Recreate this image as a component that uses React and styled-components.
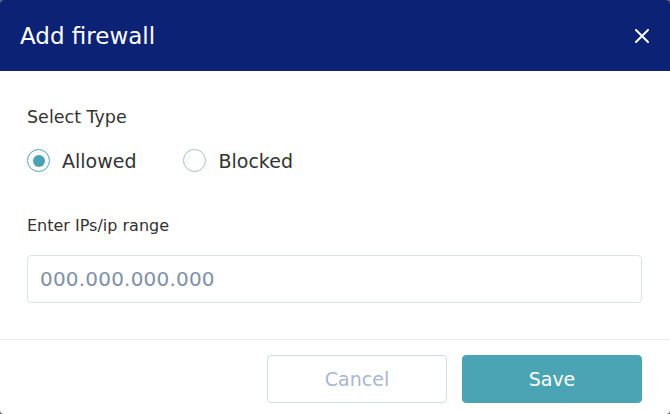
import React, { useState } from 'react'
import styled, { createGlobalStyle } from 'styled-components'

const GlobalStyle = createGlobalStyle`
  html, body {
    margin: 0;
    padding: 0;
    background: #5c5c5c;
  }
  * {
    box-sizing: border-box;
  }
`

const App = () => {
  const [type, setType] = useState('allowed')

  return (
    <>
      <GlobalStyle />
      <Modal>
        <Header>
          <h1>Add firewall</h1>
          <CloseButton aria-label="Close">
            <svg width="14" height="14" viewBox="0 0 14 14">
              <path d="M1 1 L13 13 M13 1 L1 13" stroke="#fff" strokeWidth="2" strokeLinecap="round" />
            </svg>
          </CloseButton>
        </Header>

        <Body>
          <Label>Select Type</Label>
          <RadioRow>
            <RadioOption onClick={() => setType('allowed')}>
              <Circle $checked={type === 'allowed'} />
              <span>Allowed</span>
            </RadioOption>
            <RadioOption onClick={() => setType('blocked')}>
              <Circle $checked={type === 'blocked'} />
              <span>Blocked</span>
            </RadioOption>
          </RadioRow>

          <Label $small>Enter IPs/ip range</Label>
          <Input placeholder="000.000.000.000" />
        </Body>

        <Footer>
          <Button>Cancel</Button>
          <Button $primary>Save</Button>
        </Footer>
      </Modal>
    </>
  )
}

const Modal = styled.div`
  width: 670px;
  height: 414px;
  background: #fff;
  border-radius: 4px;
  overflow: hidden;
  display: flex;
  flex-direction: column;
  font-family: 'DejaVu Sans', 'Noto Sans', sans-serif;
`

const Header = styled.div`
  height: 71px;
  flex-shrink: 0;
  background: #0b2275;
  display: flex;
  align-items: center;
  justify-content: space-between;
  padding: 0 21px 0 20px;

  h1 {
    margin: 0;
    color: #fff;
    font-size: 23px;
    font-weight: 400;
    line-height: 28px;
  }
`

const CloseButton = styled.button`
  border: none;
  background: none;
  padding: 0;
  width: 14px;
  height: 14px;
  display: flex;
  cursor: pointer;
`

const Body = styled.div`
  flex: 1;
  padding: 36px 28px 0 27px;
  display: flex;
  flex-direction: column;
  border-bottom: 1px solid #e8ebf0;
`

const Label = styled.div`
  font-size: ${p => (p.$small ? '16px' : '17.5px')};
  color: #333;
  line-height: 20px;
  margin-bottom: ${p => (p.$small ? '19px' : '22px')};
`

const RadioRow = styled.div`
  display: flex;
  gap: 47px;
  margin-bottom: 44px;
`

const RadioOption = styled.label`
  display: flex;
  align-items: center;
  gap: 12px;
  font-size: 19px;
  line-height: 22px;
  color: #333;
  cursor: pointer;
`

const Circle = styled.span`
  width: 23px;
  height: 23px;
  border-radius: 50%;
  border: 1px solid ${p => (p.$checked ? '#4aa3b3' : '#aab8d6')};
  display: flex;
  align-items: center;
  justify-content: center;

  &::after {
    content: '';
    width: 12px;
    height: 12px;
    border-radius: 50%;
    background: #4aa3b3;
    display: ${p => (p.$checked ? 'block' : 'none')};
  }
`

const Input = styled.input`
  width: 100%;
  height: 48px;
  border: 1px solid #dde2ea;
  border-radius: 4px;
  padding: 0 12px;
  font-family: inherit;
  font-size: 20px;
  letter-spacing: 0.2px;
  color: #333;
  outline: none;

  &::placeholder {
    color: #8090a8;
  }
`

const Footer = styled.div`
  height: 74px;
  flex-shrink: 0;
  display: flex;
  justify-content: flex-end;
  align-items: flex-start;
  gap: 15px;
  padding: 15px 28px 0 0;
`

const Button = styled.button`
  width: 180px;
  height: 48px;
  border-radius: 4px;
  font-family: inherit;
  font-size: 19px;
  cursor: pointer;
  border: 1px solid ${p => (p.$primary ? '#4ba4b4' : '#d3dbe9')};
  background: ${p => (p.$primary ? '#4ba4b4' : '#fff')};
  color: ${p => (p.$primary ? '#fff' : '#a9b6d3')};
`

export default App
